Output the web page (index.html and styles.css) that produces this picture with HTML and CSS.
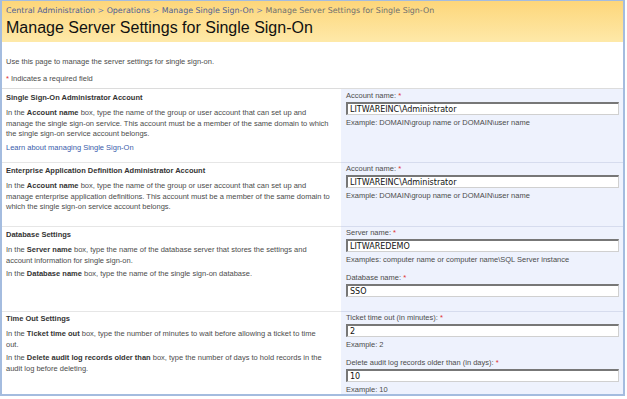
FILE: index.html
```html
<!DOCTYPE html>
<html lang="en">
<head>
  <meta charset="UTF-8" />
  <title>Manage Server Settings for Single Sign-On</title>
  <link rel="stylesheet" href="styles.css">
</head>
<body>
  <div class="frame">
    <div class="page-header">
      <div class="crumbs">
        <a href="#">Central Administration</a> &gt; <a href="#">Operations</a> &gt; <a href="#">Manage Single Sign-On</a> &gt; <span class="current">Manage Server Settings for Single Sign-On</span>
      </div>
      <h1>Manage Server Settings for Single Sign-On</h1>
    </div>

    <div class="intro">
      <p>Use this page to manage the server settings for single sign-on.</p>
      <p><span class="req">*</span> Indicates a required field</p>
    </div>

    <div class="sections">
      <div class="section s1">
        <div class="desc">
          <h3>Single Sign-On Administrator Account</h3>
          <p>In the <b>Account name</b> box, type the name of the group or user account that can set up and manage the single sign-on service. This account must be a member of the same domain to which the single sign-on service account belongs.</p>
          <p><a href="#">Learn about managing Single Sign-On</a></p>
        </div>
        <div class="fields">
          <label>Account name: <span class="req">*</span></label>
          <input type="text" value="LITWAREINC\Administrator">
          <div class="hint">Example: DOMAIN\group name or DOMAIN\user name</div>
        </div>
      </div>

      <div class="section s2">
        <div class="desc">
          <h3>Enterprise Application Definition Administrator Account</h3>
          <p>In the <b>Account name</b> box, type the name of the group or user account that can set up and manage enterprise application definitions. This account must be a member of the same domain to which the single sign-on service account belongs.</p>
        </div>
        <div class="fields">
          <label>Account name: <span class="req">*</span></label>
          <input type="text" value="LITWAREINC\Administrator">
          <div class="hint">Example: DOMAIN\group name or DOMAIN\user name</div>
        </div>
      </div>

      <div class="section s3">
        <div class="desc">
          <h3>Database Settings</h3>
          <p>In the <b>Server name</b> box, type the name of the database server that stores the settings and account information for single sign-on.</p>
          <p>In the <b>Database name</b> box, type the name of the single sign-on database.</p>
        </div>
        <div class="fields">
          <label>Server name: <span class="req">*</span></label>
          <input type="text" value="LITWAREDEMO">
          <div class="hint">Examples: computer name or computer name\SQL Server instance</div>
          <label class="next">Database name: <span class="req">*</span></label>
          <input type="text" value="SSO">
        </div>
      </div>

      <div class="section s4">
        <div class="desc">
          <h3>Time Out Settings</h3>
          <p>In the <b>Ticket time out</b> box, type the number of minutes to wait before allowing a ticket to time out.</p>
          <p>In the <b>Delete audit log records older than</b> box, type the number of days to hold records in the audit log before deleting.</p>
        </div>
        <div class="fields">
          <label>Ticket time out (in minutes): <span class="req">*</span></label>
          <input type="text" value="2">
          <div class="hint">Example: 2</div>
          <label class="next">Delete audit log records older than (in days): <span class="req">*</span></label>
          <input type="text" value="10">
          <div class="hint">Example: 10</div>
        </div>
      </div>
    </div>
  </div>
</body>
</html>
```

FILE: styles.css
```css
* {
  margin: 0;
  padding: 0;
  box-sizing: border-box;
}
body {
  background: #fff;
  font-family: 'Liberation Sans', Arial, sans-serif;
  font-size: 7.5px;
  color: #4c4c4c;
}
.frame {
  width: 625px;
  height: 396px;
  border: 2px solid #a4bcdf;
  border-top-width: 1px;
  overflow: hidden;
  background: #fff;
}
.page-header {
  height: 41px;
  background: linear-gradient(#fdd67a, #fee9a9);
  padding: 5px 4px 0;
}
.crumbs {
  font-family: 'DejaVu Sans', Verdana, sans-serif;
  font-size: 7.9px;
  line-height: 10px;
  color: #6d7aa6;
  white-space: nowrap;
}
.crumbs a {
  color: #4f5f96;
  text-decoration: none;
}
.crumbs .current {
  color: #6f6f6f;
}
h1 {
  font-family: 'Liberation Sans', Arial, sans-serif;
  font-weight: normal;
  font-size: 16px;
  color: #111;
  margin-top: 3px;
  line-height: 18px;
}
.intro {
  padding: 15px 4px 0;
  height: 46px;
}
.intro p {
  line-height: 9px;
  margin-bottom: 8px;
}
.req {
  color: #e03030;
}
.sections {
  border-top: 1px solid #dcdcdc;
}
.section {
  display: grid;
  grid-template-columns: 339px 1fr;
}
.desc {
  padding: 3px 11px 0 4px;
  border-top: 1px solid #e6e6e6;
}
.section:first-child .desc,
.section:first-child .fields {
  border-top: none;
}
.desc h3 {
  font-size: 7.5px;
  line-height: 9px;
  font-weight: bold;
  color: #333;
  margin-bottom: 6px;
}
.desc p {
  line-height: 10.5px;
  margin-bottom: 3px;
}
.desc b {
  color: #333;
}
.desc a {
  color: #3a5cab;
  text-decoration: none;
}
.fields {
  background: #eef2fd;
  border-top: 1px solid #d6dcee;
  padding: 2px 4px 0 5px;
}
.fields label {
  display: block;
  line-height: 9px;
}
.fields label.next {
  margin-top: 9px;
}
.fields input {
  display: block;
  width: 100%;
  height: 13px;
  margin-top: 2px;
  border: 1px solid #d0d0d0;
  border-top: 2px solid #777;
  border-left: 2px solid #777;
  background: #fff;
  font-family: 'DejaVu Sans', Tahoma, sans-serif;
  font-size: 8px;
  color: #111;
  padding: 0 2px;
}
.hint {
  margin-top: 3px;
  line-height: 9px;
}
.s1 { height: 73px; }
.s2 { height: 64px; }
.s3 { height: 85px; }
.s4 { height: 90px; }
.s1 .desc { padding-top: 4px; }
.s4 .desc { padding-top: 2px; }
.s2 .fields, .s3 .fields, .s4 .fields { padding-top: 1px; }
```
